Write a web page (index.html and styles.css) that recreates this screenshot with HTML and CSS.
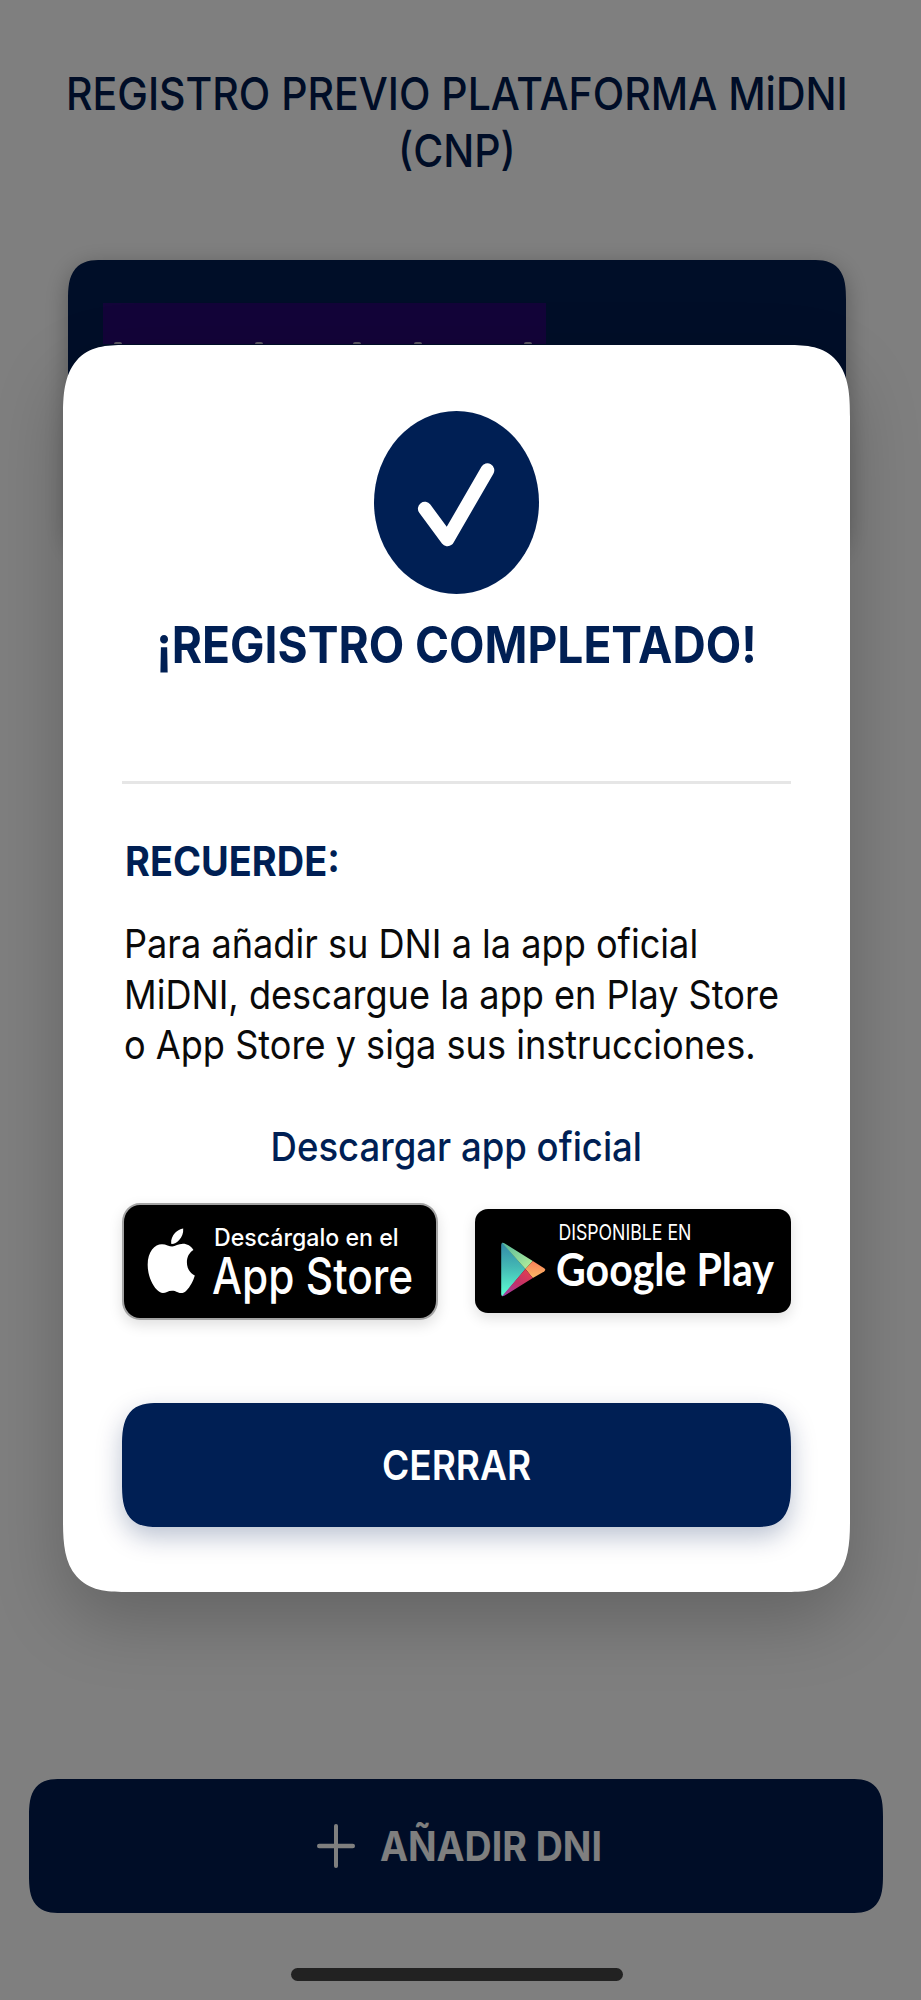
FILE: index.html
```html
<!DOCTYPE html>
<html lang="es">
<head>
<meta charset="utf-8">
<title>Registro previo MiDNI</title>
<link rel="stylesheet" href="styles.css">
</head>
<body>
<main class="screen">
  <h1 class="screen-title"><span class="condensed">REGISTRO PREVIO PLATAFORMA MiDNI<br>(CNP)</span></h1>
  <section class="dni-card">
    <div class="dni-name">
      <i class="tip"></i><i class="tip"></i><i class="tip"></i><i class="tip"></i><i class="tip"></i>
    </div>
  </section>
  <button class="add-button">
    <svg class="plus" viewBox="0 0 38 44" fill="none" stroke="#fff" stroke-linecap="round"><path d="M19 2V42" stroke-width="4"/><path d="M2.2 22H35.8" stroke-width="4.4"/></svg>
    <span class="condensed condensed-left">AÑADIR DNI</span>
  </button>
  <div class="home-indicator"></div>
</main>

<div class="overlay">
  <section class="modal" role="dialog">
    <svg class="check" viewBox="0 0 165 183">
      <ellipse cx="82.5" cy="91.5" rx="82.5" ry="91.5" fill="#001f54"/>
      <path d="M50.8 97.7L73.5 128.3L113.4 59.2" fill="none" stroke="#fff" stroke-width="13.8" stroke-linecap="round" stroke-linejoin="round"/>
    </svg>
    <h2 class="modal-title"><span class="condensed">¡REGISTRO COMPLETADO!</span></h2>
    <hr class="divider">
    <h3 class="reminder"><span class="condensed condensed-left">RECUERDE:</span></h3>
    <p class="copy"><span class="condensed condensed-left">Para añadir su DNI a la app oficial<br>MiDNI, descargue la app en Play Store<br>o App Store y siga sus instrucciones.</span></p>
    <p class="download"><span class="condensed">Descargar app oficial</span></p>
    <div class="stores">
      <a class="store apple">
        <svg viewBox="0 0 311 112" fill="#fff">
          <g transform="translate(23.4 22.4)">
            <path d="M35.6 0.6C36 5.4 34.2 9.2 31.6 12.1C29.1 15 26.2 16.3 23.6 16C23.2 11.6 25 7.8 27.6 5C29.8 2.6 32.7 1 35.6 0.6Z"/>
            <path d="M24.6 18.7C27.6 18.7 30.8 16 35.4 16C39.5 16 43.4 18.2 45.8 22.2C41.6 24.9 39.3 29 39.3 34.3C39.3 40.4 42.4 45.2 47.2 47.5C45.6 52.9 42.5 58.9 38.9 62.4C37.2 64.1 35.4 65 33.4 65C30.4 65 28.6 62.7 24.5 62.7C20.4 62.7 18.4 65 15.4 65C13.2 65 11.2 63.7 9.4 61.8C3.9 56.2 0.2 46.3 0.2 36.8C0.2 23.6 7.2 16.4 14.4 16.4C18.5 16.4 21.9 18.7 24.6 18.7Z"/>
          </g>
          <text class="badge-text" x="89.7" y="41" font-size="24" font-weight="500" textLength="184" lengthAdjust="spacingAndGlyphs">Descárgalo en el</text>
          <text class="badge-text" x="87.8" y="88" font-size="50" font-weight="550" textLength="200.5" lengthAdjust="spacingAndGlyphs">App Store</text>
        </svg>
      </a>
      <a class="store google">
        <svg viewBox="0 0 316 104" fill="#fff">
          <defs>
            <linearGradient id="cyan" x1="0" y1="0" x2="0" y2="1"><stop offset="0" stop-color="#3389a8"/><stop offset=".45" stop-color="#43b8b4"/><stop offset="1" stop-color="#5dffd2"/></linearGradient>
            <linearGradient id="green" x1="0" y1="0" x2="1" y2="1"><stop offset="0" stop-color="#54b79a"/><stop offset="1" stop-color="#b9f19a"/></linearGradient>
            <linearGradient id="orange" x1="0" y1="0" x2="0" y2="1"><stop offset="0" stop-color="#f98058"/><stop offset="1" stop-color="#fbb765"/></linearGradient>
            <linearGradient id="red" x1="1" y1="0" x2="0" y2="1"><stop offset="0" stop-color="#e8404c"/><stop offset=".5" stop-color="#c23168"/><stop offset="1" stop-color="#9c3fae"/></linearGradient>
          </defs>
          <path d="M26.2 36Q26.2 33.5 28 34.1L50.4 60L28 86.9Q26.2 87.5 26.2 85Z" fill="url(#cyan)"/>
          <path d="M27 33.7Q28.3 33.4 29.8 34.4L57.8 52L50.4 60Z" fill="url(#green)"/>
          <path d="M57.8 52L69.2 59.2Q71.4 60.8 69.2 62.4L57.8 69L50.4 60Z" fill="url(#orange)"/>
          <path d="M57.8 69L29.8 86.6Q28.3 87.6 27 87.3L50.4 60Z" fill="url(#red)"/>
          <text class="badge-text" x="83.4" y="30.5" font-size="22" font-weight="400" textLength="133" lengthAdjust="spacingAndGlyphs">DISPONIBLE EN</text>
          <text class="play-text" x="81" y="77" font-size="46.5" textLength="218" lengthAdjust="spacingAndGlyphs">Google Play</text>
        </svg>
      </a>
    </div>
    <button class="close-button"><span class="condensed">CERRAR</span></button>
  </section>
</div>
</body>
</html>
```

FILE: styles.css
```css
* { box-sizing: border-box; margin: 0; }

body {
  position: relative;
  width: 921px;
  height: 2000px;
  overflow: hidden;
  background: #fff;
  font-family: Inter, "Liberation Sans", sans-serif;
}

button { border: 0; font-family: inherit; padding: 0; }

.condensed {
  display: inline-block;
  white-space: nowrap;
  transform: scaleX(.903);
}
.condensed-left { transform-origin: left; }

.screen {
  display: flex;
  flex-direction: column;
  height: 2000px;
  padding: 65px 0 19px;
}

.screen-title {
  width: 914px;
  color: #001b4e;
  font-size: 45.4px;
  font-weight: 500;
  line-height: 57px;
  text-align: center;
}

.dni-card {
  width: 778px;
  height: 290px;
  margin: 81px 0 0 67.5px;
  padding: 42.5px 35px 0;
  background: #001c50;
  border-radius: 34px / 40px;
  corner-shape: superellipse(1.5);
  box-shadow: 0 6px 24px rgba(0, 0, 0, .3);
}

.dni-name {
  display: flex;
  align-items: flex-end;
  width: 443px;
  height: 41px;
  padding-left: 11px;
  background: #260872;
}
.tip { width: 8px; height: 1.5px; border-radius: 4px 4px 0 0; background: #b8b0c8; }
.tip:nth-child(2) { margin-left: 133px; }
.tip:nth-child(3) { margin-left: 90px; }
.tip:nth-child(4) { margin-left: 53px; }
.tip:nth-child(5) { margin-left: 102px; }

.add-button {
  display: flex;
  align-items: center;
  width: 854px;
  height: 134.5px;
  margin: auto 0 55px 29.4px;
  padding-left: 287.6px;
  gap: 25.3px;
  background: #001b4e;
  border-radius: 32px / 38px;
  corner-shape: superellipse(1.5);
  color: #fff;
  font-size: 41px;
  font-weight: 700;
}
.add-button .condensed { transform: scaleX(.915); }
.plus { width: 38px; height: 44px; }

.home-indicator {
  width: 332px;
  height: 13px;
  margin-left: 291px;
  border-radius: 7px;
  background: #444;
}

.overlay {
  position: absolute;
  inset: 0;
  padding: 344.5px 0 0 62.5px;
  background: rgba(0, 0, 0, .5);
}

.modal {
  display: flex;
  flex-direction: column;
  width: 787.5px;
  height: 1247.5px;
  padding: 66px 59px 0 59.5px;
  background: #fff;
  border-radius: 62px / 72px;
  corner-shape: superellipse(1.5);
  box-shadow: 0 28px 70px rgba(0, 0, 0, .22);
  color: #001f54;
}

.check { width: 165px; height: 183px; align-self: center; }

.modal-title {
  margin-top: 21.5px;
  font-size: 51px;
  font-weight: 650;
  line-height: 60px;
  text-align: center;
}

.divider { width: 100%; height: 3px; margin-top: 106px; border: 0; background: #e6e6e6; }

.reminder {
  margin-top: 53px;
  padding-left: 2.5px;
  font-size: 40.5px;
  font-weight: 650;
  line-height: 50px;
}
.reminder .condensed { transform: scaleX(.937); }

.copy {
  margin-top: 32px;
  padding-left: 2px;
  color: #0a0a0a;
  font-size: 40px;
  line-height: 50.5px;
}

.download {
  margin-top: 51.5px;
  font-size: 40.2px;
  font-weight: 500;
  line-height: 50px;
  text-align: center;
}
.download .condensed { transform: scaleX(.909); }

.stores {
  display: flex;
  align-items: center;
  justify-content: space-between;
  margin-top: 30.5px;
}
.store {
  display: block;
  background: #000;
  box-shadow: 0 5px 14px rgba(0, 0, 0, .13);
}
.store svg { display: block; width: 100%; height: 100%; }
.apple { width: 316px; height: 117px; border: 2.5px solid #a3a3a3; border-radius: 18px / 19px; }
.google { width: 316px; height: 104px; border-radius: 13px; }
.badge-text { font-family: Inter, sans-serif; }
.play-text { font-family: Lato, sans-serif; font-weight: 700; }

.close-button {
  height: 124px;
  margin-top: 83px;
  border-radius: 36px / 44px;
  corner-shape: superellipse(1.5);
  background: #001f54;
  box-shadow: 0 10px 26px rgba(0, 31, 84, .27);
  color: #fff;
  font-size: 41px;
  font-weight: 600;
}
```
